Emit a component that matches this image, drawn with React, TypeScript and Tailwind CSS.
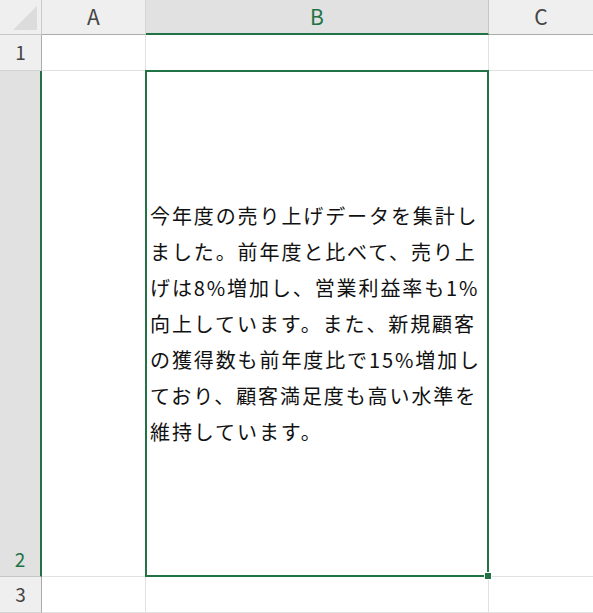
import React from 'react';

const LINES = [
  '今年度の売り上げデータを集計し',
  'ました。前年度と比べて、売り上',
  'げは8%増加し、営業利益率も1%',
  '向上しています。また、新規顧客',
  'の獲得数も前年度比で15%増加し',
  'ており、顧客満足度も高い水準を',
  '維持しています。',
];

const font = { fontFamily: '"Noto Sans CJK JP", "Noto Sans", sans-serif' };

export default function App() {
  return (
    <div
      className="grid w-[593px] h-[613px] bg-white overflow-hidden"
      style={{ ...font, gridTemplateColumns: '42px 104px 343px 104px', gridTemplateRows: '35px 36px 506px 36px' }}
    >
      {/* corner */}
      <div className="relative bg-[#efefef] border-r border-b border-[#c8c8c8]">
        <div
          className="absolute right-[4px] bottom-[4px] w-0 h-0 border-l-[24px] border-l-transparent border-b-[24px] border-b-[#dcdcdc]"
        />
      </div>
      {/* column headers */}
      <div className="flex items-center justify-center bg-[#efefef] border-r border-[#d4d4d4] border-b border-b-[#ababab] text-[21px] text-[#444]">A</div>
      <div className="flex items-center justify-center bg-[#e1e1e1] border-r border-[#c6c6c6] border-b-2 border-b-[#217346] text-[21px] text-[#217346]">B</div>
      <div className="flex items-center justify-center bg-[#efefef] border-b border-b-[#ababab] text-[21px] text-[#444]">C</div>

      {/* row 1 */}
      <div className="flex items-center justify-center bg-[#efefef] border-r border-r-[#ababab] border-b border-[#d4d4d4] text-[19px] text-[#444]">1</div>
      <div className="border-r border-b border-[#e1e1e1]" />
      <div className="border-r border-b border-[#e1e1e1]" />
      <div className="border-b border-[#e1e1e1]" />

      {/* row 2 */}
      <div className="flex items-end justify-center pb-[3px] bg-[#e1e1e1] border-r-2 border-r-[#217346] border-b border-b-[#c6c6c6] text-[19px] text-[#217346]">2</div>
      <div className="border-r border-b border-[#e1e1e1]" />
      <div className="relative flex flex-col justify-center pl-[4px] border-r border-b border-[#e1e1e1]">
        {LINES.map((l) => (
          <div key={l} className="h-[36px] leading-[36px] whitespace-nowrap text-[20px] tracking-[1.9px] text-[#111]">{l}</div>
        ))}
        <div className="absolute -left-[1px] -top-[1px] -right-[1px] -bottom-[1px] border-2 border-[#217346] pointer-events-none" />
        <div className="absolute -right-[4px] -bottom-[4px] w-[8px] h-[8px] bg-[#217346] border border-white" />
      </div>
      <div className="border-b border-[#e1e1e1]" />

      {/* row 3 */}
      <div className="flex items-center justify-center bg-[#efefef] border-r border-r-[#ababab] border-b border-[#d4d4d4] text-[19px] text-[#444]">3</div>
      <div className="border-r border-b border-[#e1e1e1]" />
      <div className="border-r border-b border-[#e1e1e1]" />
      <div className="border-b border-[#e1e1e1]" />
    </div>
  );
}
